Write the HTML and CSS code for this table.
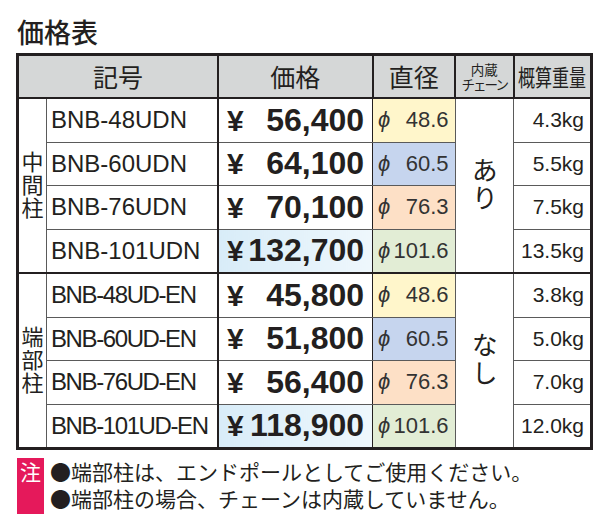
FILE: index.html
```html
<!DOCTYPE html>
<html lang="ja">
<head>
<meta charset="utf-8">
<title>価格表</title>
<link rel="stylesheet" href="styles.css">
</head>
<body>
<h1 class="title">価格表</h1>
<table class="table">
  <colgroup>
    <col class="c-cat"><col class="c-model"><col class="c-price"><col class="c-dia"><col class="c-chain"><col class="c-wt">
  </colgroup>
  <thead>
    <tr>
      <th colspan="2">記号</th>
      <th>価格</th>
      <th>直径</th>
      <th class="chain-h"><span class="chain-top">内蔵</span><span class="chain-sub">チェーン</span></th>
      <th class="wt-h"><span class="squeeze">概算重量</span></th>
    </tr>
  </thead>
  <tbody class="sec">
    <tr>
      <td rowspan="4" class="cat"><span class="vert">中間柱</span></td>
      <td class="model">BNB-48UDN</td>
      <td class="pr"><div class="pr-in"><span class="yen">¥</span><span>56,400</span></div></td>
      <td class="dia d48"><div class="dia-in"><i>ϕ</i><span>48.6</span></div></td>
      <td rowspan="4" class="chain"><span class="vert">あり</span></td>
      <td class="wt">4.3kg</td>
    </tr>
    <tr>
      <td class="model">BNB-60UDN</td>
      <td class="pr"><div class="pr-in"><span class="yen">¥</span><span>64,100</span></div></td>
      <td class="dia d60"><div class="dia-in"><i>ϕ</i><span>60.5</span></div></td>
      <td class="wt">5.5kg</td>
    </tr>
    <tr>
      <td class="model">BNB-76UDN</td>
      <td class="pr"><div class="pr-in"><span class="yen">¥</span><span>70,100</span></div></td>
      <td class="dia d76"><div class="dia-in"><i>ϕ</i><span>76.3</span></div></td>
      <td class="wt">7.5kg</td>
    </tr>
    <tr>
      <td class="model">BNB-101UDN</td>
      <td class="pr hl"><div class="pr-in"><span class="yen">¥</span><span>132,700</span></div></td>
      <td class="dia d101"><div class="dia-in"><i>ϕ</i><span>101.6</span></div></td>
      <td class="wt">13.5kg</td>
    </tr>
  </tbody>
  <tbody class="sec sec2">
    <tr>
      <td rowspan="4" class="cat"><span class="vert">端部柱</span></td>
      <td class="model tight">BNB-48UD-EN</td>
      <td class="pr"><div class="pr-in"><span class="yen">¥</span><span>45,800</span></div></td>
      <td class="dia d48"><div class="dia-in"><i>ϕ</i><span>48.6</span></div></td>
      <td rowspan="4" class="chain"><span class="vert">なし</span></td>
      <td class="wt">3.8kg</td>
    </tr>
    <tr>
      <td class="model tight">BNB-60UD-EN</td>
      <td class="pr"><div class="pr-in"><span class="yen">¥</span><span>51,800</span></div></td>
      <td class="dia d60"><div class="dia-in"><i>ϕ</i><span>60.5</span></div></td>
      <td class="wt">5.0kg</td>
    </tr>
    <tr>
      <td class="model tight">BNB-76UD-EN</td>
      <td class="pr"><div class="pr-in"><span class="yen">¥</span><span>56,400</span></div></td>
      <td class="dia d76"><div class="dia-in"><i>ϕ</i><span>76.3</span></div></td>
      <td class="wt">7.0kg</td>
    </tr>
    <tr>
      <td class="model tight">BNB-101UD-EN</td>
      <td class="pr hl"><div class="pr-in"><span class="yen">¥</span><span>118,900</span></div></td>
      <td class="dia d101"><div class="dia-in"><i>ϕ</i><span>101.6</span></div></td>
      <td class="wt">12.0kg</td>
    </tr>
  </tbody>
</table>
<div class="note">
  <div class="mark">注</div>
  <div class="lines">
    <p>●端部柱は、エンドポールとしてご使用ください。</p>
    <p>●端部柱の場合、チェーンは内蔵していません。</p>
  </div>
</div>
</body>
</html>
```
FILE: styles.css
```css
html, body {
  margin: 0;
  background: #fff;
}
body {
  padding: 16px 0 0 16px;
  color: #231f20;
  font-family: "Liberation Sans", "Noto Sans CJK JP", sans-serif;
}
.title {
  margin: 0 0 6px 1px;
  font: 500 27px/31px "Noto Sans CJK JP", sans-serif;
}
.table {
  border-collapse: collapse;
  table-layout: fixed;
  width: 577px;
  border: 3px solid #231f20;
}
.c-cat { width: 29px; }
.c-model { width: 171.5px; }
.c-price { width: 154.5px; }
.c-dia { width: 82.5px; }
.c-chain { width: 58.5px; }
.c-wt { width: 78px; }

th {
  height: 41px;
  padding: 0;
  background: #d5d7d7;
  border: 2px solid #231f20;
  font: 400 25px/1 "Noto Sans CJK JP", sans-serif;
  text-align: center;
  vertical-align: middle;
}
.chain-h {
  font-size: 13.5px;
  line-height: 15px;
}
.chain-top,
.chain-sub {
  display: block;
  height: 15px;
}
.chain-sub {
  letter-spacing: -2px;
}
.wt-h {
  font-size: 23px;
  white-space: nowrap;
}
.squeeze {
  display: inline-block;
  margin: 0 -12px;
  transform: scaleX(0.74);
}

td {
  height: 42.5px;
  padding: 0;
  border: 1px solid #5a5a5a;
  vertical-align: middle;
  white-space: nowrap;
}
.sec2 tr:first-child td {
  border-top: 2px solid #231f20;
}
.vert {
  display: inline-block;
  writing-mode: vertical-rl;
  text-orientation: upright;
}
.cat {
  text-align: center;
  font: 400 22px/22px "Noto Sans CJK JP", sans-serif;
}
.cat .vert {
  letter-spacing: 1px;
}
.model {
  padding-left: 4px;
  font-size: 24px;
  border-right: 2px solid #231f20;
}
.model.tight {
  letter-spacing: -1.4px;
}
.pr {
  border-right: 1px solid #231f20;
}
.pr-in {
  display: flex;
  justify-content: space-between;
  align-items: baseline;
  padding: 0 8px 0 8px;
  font-weight: 700;
  font-size: 32px;
}
.yen {
  font-size: 30px;
}
.hl {
  background: linear-gradient(to right, #d8ecf8, #eef7fc);
}
.dia-in {
  display: flex;
  justify-content: space-between;
  align-items: baseline;
  padding: 0 6px 0 5px;
  font-size: 22px;
  color: #333;
}
.dia-in i {
  font-style: italic;
  font-size: 22px;
}
.d48 { background: #fff6cb; }
.d60 { background: #c6d5ee; }
.d76 { background: #fde0c6; }
.d101 { background: #e2edd5; }
.chain {
  text-align: center;
  font: 400 26px/26px "Noto Sans CJK JP", sans-serif;
}
.chain .vert {
  letter-spacing: 2px;
}
.wt {
  text-align: right;
  padding-right: 6px;
  font-size: 21px;
}

.note {
  display: flex;
  margin-top: 8px;
  height: 56px;
}
.mark {
  width: 27px;
  margin-left: 1px;
  background: #e5195b;
  color: #fff;
  text-align: center;
  font: 400 21px/27px "Noto Sans CJK JP", sans-serif;
}
.lines {
  margin-left: 6px;
  font: 400 21px/27px "Noto Sans CJK JP", sans-serif;
}
.lines p {
  margin: 0;
}
```
